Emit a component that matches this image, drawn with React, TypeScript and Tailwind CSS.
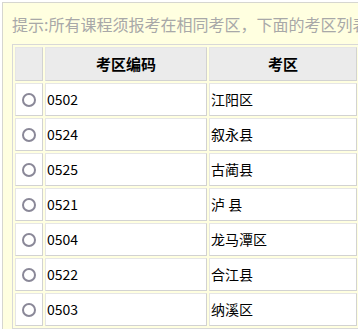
import React from "react";

const rows = [
  ["0502", "江阳区"],
  ["0524", "叙永县"],
  ["0525", "古蔺县"],
  ["0521", "泸 县"],
  ["0504", "龙马潭区"],
  ["0522", "合江县"],
  ["0503", "纳溪区"],
];

const cellBorder =
  "border border-t-[#e6e6e6] border-l-[#e6e6e6] border-r-[#d2d2d2] border-b-[#d2d2d2]";

export default function App() {
  return (
    <div
      className="w-[358px] h-[329px] overflow-hidden bg-white"
      style={{ fontFamily: '"Noto Sans CJK SC", "Noto Sans", sans-serif' }}
    >
      <div className="mt-[2px] ml-[2px] w-[367px] h-[400px] border border-[#d6d6d0] bg-[#ffffe0] pl-[9px] pt-[9px]">
        <div className="h-[24px] leading-[24px] text-[16px] text-[#a8a8a8] whitespace-nowrap overflow-hidden">
          提示:所有课程须报考在相同考区，下面的考区列表
        </div>
        <table
          className="mt-[8px] border border-[#d8d8d8] border-separate"
          style={{ borderSpacing: "2px" }}
        >
          <thead>
            <tr>
              <th className={`${cellBorder} bg-[#ebebeb] w-[28px] h-[34px] p-0`}></th>
              <th className={`${cellBorder} bg-[#ebebeb] w-[162px] h-[34px] p-0 text-[15px] font-bold text-black text-center`}>
                考区编码
              </th>
              <th className={`${cellBorder} bg-[#ebebeb] w-[148px] h-[34px] p-0 text-[15px] font-bold text-black text-center`}>
                考区
              </th>
            </tr>
          </thead>
          <tbody>
            {rows.map(([code, name]) => (
              <tr key={code}>
                <td className={`${cellBorder} bg-white h-[33px] p-0`}>
                  <div className="flex items-center justify-center">
                    <span className="block w-[14px] h-[14px] rounded-full border-2 border-[#8a8898] bg-white" />
                  </div>
                </td>
                <td className={`${cellBorder} bg-white h-[33px] px-px py-0 text-[14px] text-black`}>
                  {code}
                </td>
                <td className={`${cellBorder} bg-white h-[33px] px-px py-0 text-[14px] text-black whitespace-pre`}>
                  {name}
                </td>
              </tr>
            ))}
          </tbody>
        </table>
      </div>
    </div>
  );
}
